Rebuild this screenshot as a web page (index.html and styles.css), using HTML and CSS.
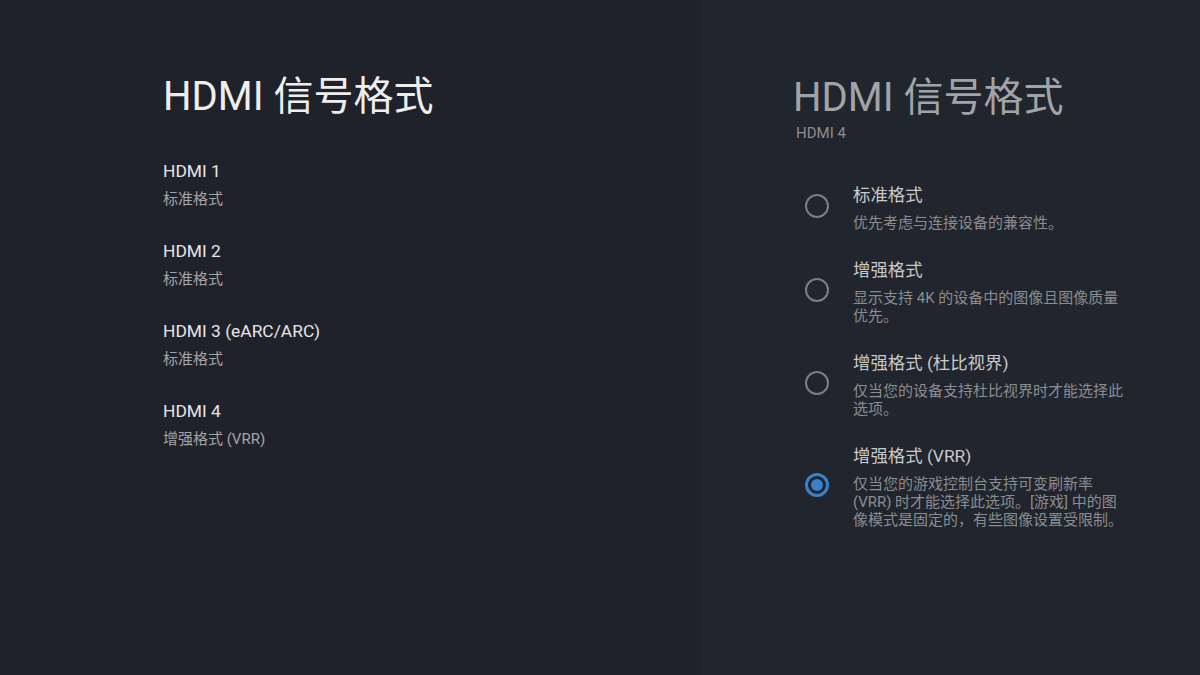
FILE: index.html
```html
<!DOCTYPE html>
<html lang="zh-CN">
<head>
<meta charset="utf-8">
<title>HDMI 信号格式</title>
<link rel="stylesheet" href="styles.css">
</head>
<body>
<div class="screen">
  <section class="left">
    <h1 class="title">HDMI 信号格式</h1>
    <ul class="ports">
      <li class="port"><div class="port-name">HDMI 1</div><div class="port-sub">标准格式</div></li>
      <li class="port"><div class="port-name">HDMI 2</div><div class="port-sub">标准格式</div></li>
      <li class="port"><div class="port-name">HDMI 3 (eARC/ARC)</div><div class="port-sub">标准格式</div></li>
      <li class="port"><div class="port-name">HDMI 4</div><div class="port-sub">增强格式 (VRR)</div></li>
    </ul>
  </section>
  <section class="right">
    <h2 class="title title-dim">HDMI 信号格式</h2>
    <div class="subtitle">HDMI 4</div>
    <ul class="options">
      <li class="option">
        <span class="radio"></span>
        <div class="opt-text">
          <div class="opt-name">标准格式</div>
          <div class="opt-desc">优先考虑与连接设备的兼容性。</div>
        </div>
      </li>
      <li class="option">
        <span class="radio"></span>
        <div class="opt-text">
          <div class="opt-name">增强格式</div>
          <div class="opt-desc">显示支持 4K 的设备中的图像且图像质量优先。</div>
        </div>
      </li>
      <li class="option">
        <span class="radio"></span>
        <div class="opt-text">
          <div class="opt-name">增强格式 (杜比视界)</div>
          <div class="opt-desc">仅当您的设备支持杜比视界时才能选择此选项。</div>
        </div>
      </li>
      <li class="option">
        <span class="radio radio-on"></span>
        <div class="opt-text">
          <div class="opt-name">增强格式 (VRR)</div>
          <div class="opt-desc">仅当您的游戏控制台支持可变刷新率 (VRR) 时才能选择此选项。[游戏] 中的图像模式是固定的，有些图像设置受限制。</div>
        </div>
      </li>
    </ul>
  </section>
</div>
</body>
</html>
```

FILE: styles.css
```css
* { box-sizing: border-box; }
html, body {
  margin: 0;
  padding: 0;
  width: 1200px;
  height: 675px;
  overflow: hidden;
  background: #1f222a;
  font-family: Roboto, "Noto Sans CJK SC", sans-serif;
}
ul { list-style: none; margin: 0; padding: 0; }
.screen {
  display: flex;
  width: 1200px;
  height: 675px;
}
.left {
  width: 701px;
  background: #1f222a;
  padding: 73px 0 0 163px;
}
.right {
  flex: 1;
  background: #21252d;
  padding: 74px 0 0 92px;
}
.title {
  margin: 0;
  font-size: 40px;
  line-height: 48px;
  font-weight: 400;
  color: #eeeeee;
  white-space: nowrap;
}
.title-dim { color: #a1a3a7; }
.subtitle {
  margin-top: 2px;
  font-size: 15px;
  line-height: 18px;
  color: #8b8d91;
  margin-left: 3px;
}
.ports {
  margin-top: 38px;
  display: flex;
  flex-direction: column;
  gap: 31px;
}
.port-name {
  font-size: 17.4px;
  line-height: 24px;
  color: #e6e6e6;
}
.port-sub {
  margin-top: 7px;
  font-size: 15px;
  line-height: 18px;
  color: #a4a5a8;
}
.options {
  margin-top: 41px;
  display: flex;
  flex-direction: column;
  gap: 26px;
}
.option {
  display: flex;
  align-items: center;
  gap: 24px;
  margin-left: 12px;
}
.radio {
  flex: none;
  width: 24px;
  height: 24px;
  margin-top: -4px;
  border-radius: 50%;
  border: 2px solid #7c7e82;
  position: relative;
}
.radio-on {
  border: 3px solid #3a82c6;
}
.radio-on::after {
  content: "";
  position: absolute;
  left: 3px;
  top: 3px;
  width: 12px;
  height: 12px;
  border-radius: 50%;
  background: #3a82c6;
}
.opt-text { width: 276px; }
.opt-name {
  font-size: 17.4px;
  line-height: 24px;
  color: #c9cacc;
  white-space: nowrap;
}
.opt-desc {
  margin-top: 7px;
  font-size: 15px;
  line-height: 18px;
  color: #8b8d91;
}
```
